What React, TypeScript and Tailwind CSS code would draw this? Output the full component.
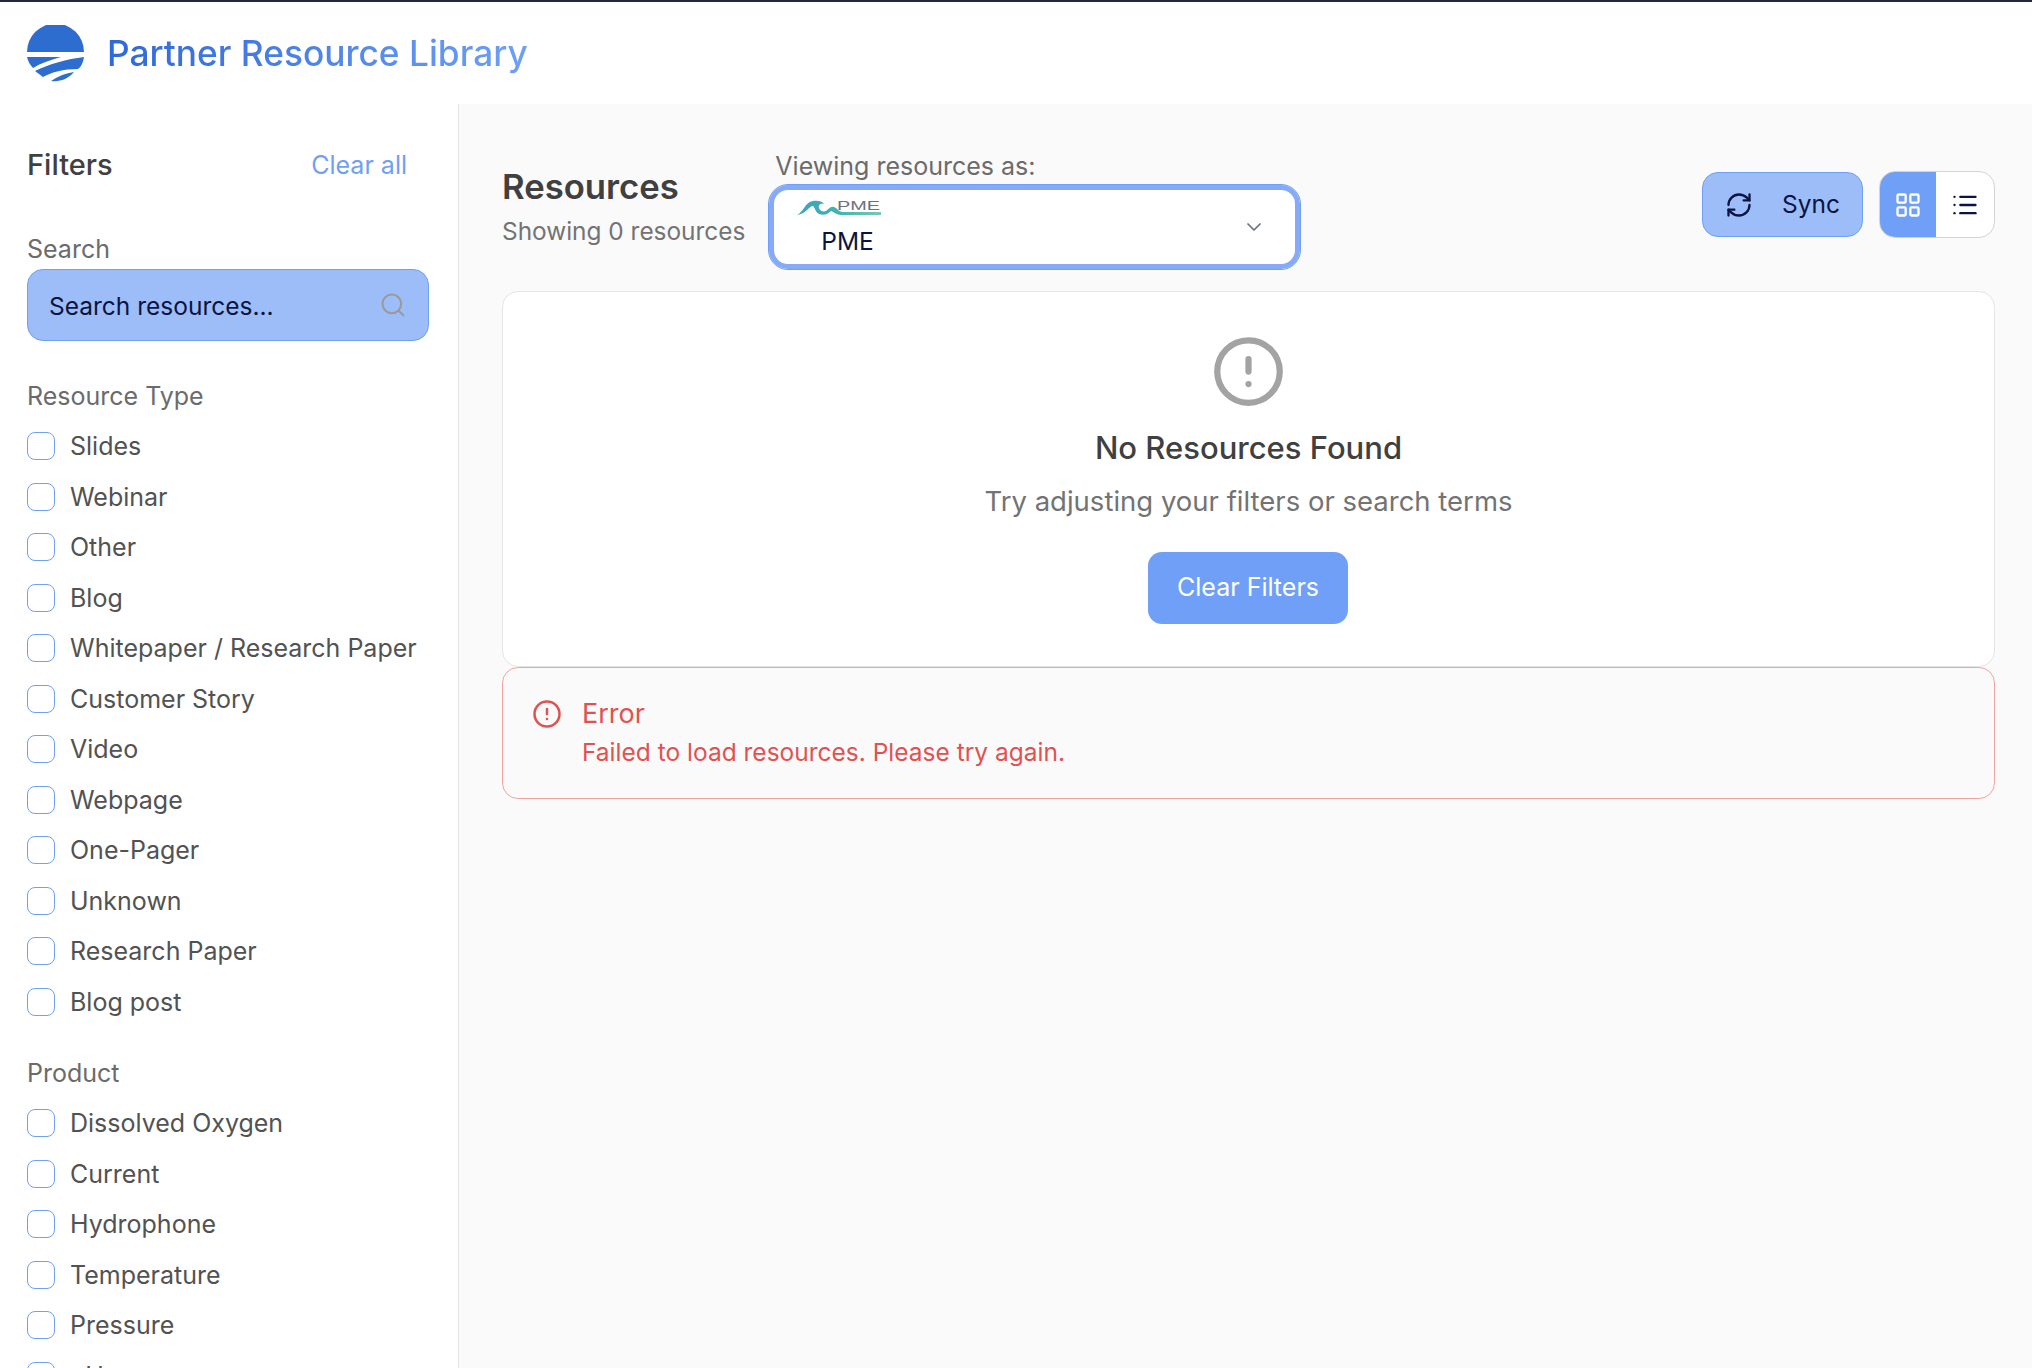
import { AlertCircle, ChevronDown, LayoutGrid, List, RefreshCw, Search } from 'lucide-react';

const resourceTypes = [
  'Slides',
  'Webinar',
  'Other',
  'Blog',
  'Whitepaper / Research Paper',
  'Customer Story',
  'Video',
  'Webpage',
  'One-Pager',
  'Unknown',
  'Research Paper',
  'Blog post',
];

const products = ['Dissolved Oxygen', 'Current', 'Hydrophone', 'Temperature', 'Pressure', 'pH'];

function FilterGroup({ title, items }: { title: string; items: string[] }) {
  return (
    <div>
      <h3 className="h-[30px] text-[25px] leading-[30px] text-[#6b6b6b]">{title}</h3>
      <div className="mt-[10px] flex flex-col">
        {items.map((item) => (
          <label key={item} className="flex h-[50.5px] shrink-0 items-center gap-[15px]">
            <span className="h-[28px] w-[28px] shrink-0 rounded-[8px] border border-[#6f9ff6] bg-white" />
            <span className="text-[25px] leading-[30px] text-[#525252]">{item}</span>
          </label>
        ))}
      </div>
    </div>
  );
}

function BrandMark() {
  return (
    <svg viewBox="0 0 57 57" className="h-[57px] w-[57px] shrink-0">
      <path d="M0 27 A28.5 28.5 0 0 1 57 27 Z" fill="#2d6dd0" />
      <path d="M0 32 H34 C24 35 14 38 6 43 C3 40 1 36 0 32 Z" fill="#2d6dd0" />
      <path d="M57 32 C56 38 54 42 51 44 C36 44 25 47 16 52 L8 46 C22 39 40 34 57 32 Z" fill="#2d6dd0" />
      <path d="M47 47 C41 54 33 57 24 56 C31 51 39 48 47 47 Z" fill="#2d6dd0" />
    </svg>
  );
}

function PmeLogo() {
  return (
    <svg viewBox="0 0 84 18" className="h-[18px] w-[84px]">
      <defs>
        <linearGradient id="pmeWave" x1="0" x2="1" y1="0" y2="0">
          <stop offset="0" stopColor="#3f9fc0" />
          <stop offset="0.5" stopColor="#3db6b0" />
          <stop offset="1" stopColor="#7cc8b4" />
        </linearGradient>
      </defs>
      <path
        d="M0 16 C6 14 8 3 16 2 C22 1 26 3 27 5 C23 4 21 6 22 9 C23 12 26 13 29 12 C32 10 33 7 37 8 C40 9 41 12 45 13 H84 V16 H44 C40 16 37 13 34 12 C31 15 27 17 22 15 C18 13 18 8 16 7 C12 7 9 15 0 16 Z"
        fill="url(#pmeWave)"
      />
      <text
        x="40"
        y="10.5"
        fontSize="13"
        fontFamily="Liberation Sans, sans-serif"
        fill="#6b7280"
        textLength="43"
        lengthAdjust="spacingAndGlyphs"
      >
        PME
      </text>
    </svg>
  );
}

export default function App() {
  return (
    <div className="flex h-screen flex-col overflow-hidden border-t-2 border-[#1f2937] bg-white font-['Inter',sans-serif]">
      {/* Header */}
      <header className="flex h-[102px] shrink-0 items-center gap-[23px] pl-[27px]">
        <BrandMark />
        <h1 className="mt-[2px] bg-gradient-to-r from-[#2f68d8] to-[#6ea0f5] bg-clip-text text-[35.3px] font-medium leading-[44px] text-transparent">
          Partner Resource Library
        </h1>
      </header>

      <div className="flex min-h-0 flex-1">
        {/* Filters */}
        <aside className="w-[459px] shrink-0 overflow-hidden border-r border-[#e5e5e5] pl-[27px] pr-[29px] pt-[43px]">
          <div className="flex h-[36px] items-center justify-between pr-[22px]">
            <h2 className="text-[29px] font-medium leading-[36px] text-[#404040]">Filters</h2>
            <button type="button" className="text-[25px] leading-[30px] text-[#6f9ff6]">
              Clear all
            </button>
          </div>
          <div className="mt-[51px]">
            <label className="block h-[35px] text-[25px] leading-[30px] text-[#6b6b6b]">Search</label>
            <div className="flex h-[72px] items-center justify-between rounded-[16px] border border-[#6f9ff6] bg-[#9dbdf9] pl-[21px] pr-[21px]">
              <span className="pt-[2px] text-[24.5px] text-[#0b1440]">Search resources...</span>
              <Search className="h-[28px] w-[28px] text-[#9a9a9a]" strokeWidth={1.75} />
            </div>
          </div>
          <div className="mt-[40px] flex flex-col gap-[31px]">
            <FilterGroup title="Resource Type" items={resourceTypes} />
            <FilterGroup title="Product" items={products} />
          </div>
        </aside>

        {/* Main */}
        <main className="min-w-0 flex-1 bg-[#fafafa] pl-[43px] pr-[37px] pt-[47px]">
          <div className="flex h-[140px] items-start justify-between">
            <div className="flex items-start gap-[23px]">
              <div className="pt-[13px]">
                <h2 className="text-[34.7px] font-semibold leading-[44px] text-[#404040]">Resources</h2>
                <p className="mt-[8px] text-[24.4px] leading-[30px] text-[#737373]">Showing 0 resources</p>
              </div>
              <div className="-mt-[3px]">
                <label className="block h-[36px] pl-[7px] text-[25px] leading-[36px] text-[#6b6b6b]">Viewing resources as:</label>
                <div className="flex h-[86px] w-[533px] items-center justify-between rounded-[20px] border border-[#6f9ff6] bg-white pl-[28px] pr-[34px] ring-[5px] ring-inset ring-[#86aaf8]">
                  <div className="flex flex-col">
                    <PmeLogo />
                    <span className="mt-[9px] pl-[24px] text-[24.5px] leading-[30px] text-[#0b1440]">PME</span>
                  </div>
                  <ChevronDown className="h-[24px] w-[24px] text-[#6b7280]" strokeWidth={1.75} />
                </div>
              </div>
            </div>
            <div className="flex items-start gap-[16px] pt-[21px]">
              <button
                type="button"
                className="flex h-[65px] w-[161px] items-center gap-[29px] rounded-[16px] border border-[#6f9ff6] bg-[#9dbdf9] pl-[22px] text-[24.5px] text-[#0b1440]"
              >
                <RefreshCw className="h-[28px] w-[28px]" strokeWidth={2} />
                Sync
              </button>
              <div className="-mt-[1px] flex h-[67px] w-[116px] overflow-hidden rounded-[16px] border border-[#d4d4d4] bg-white">
                <button type="button" className="flex w-[56px] items-center justify-center bg-[#6f9ff6] text-white">
                  <LayoutGrid className="h-[28px] w-[28px]" strokeWidth={2} />
                </button>
                <button type="button" className="flex flex-1 items-center justify-center text-[#0b1440]">
                  <List className="h-[28px] w-[28px]" strokeWidth={2} />
                </button>
              </div>
            </div>
          </div>

          <div>
            <section className="flex h-[376px] flex-col items-center rounded-[16px] border border-[#e5e5e5] bg-white pt-[42px]">
              <AlertCircle className="h-[75px] w-[75px] text-[#a3a3a3]" strokeWidth={2} />
              <h3 className="mt-[20px] text-[31px] font-medium leading-[38px] text-[#404040]">No Resources Found</h3>
              <p className="mt-[16px] text-[27.5px] leading-[36px] text-[#737373]">Try adjusting your filters or search terms</p>
              <button type="button" className="mr-[1px] mt-[33px] h-[72px] w-[200px] rounded-[14px] bg-[#6f9ff6] text-[25px] text-white">
                Clear Filters
              </button>
            </section>
            <section className="flex h-[132px] items-start gap-[20px] rounded-[16px] border border-[#f3a3a3] pl-[29px] pt-[29px]">
              <AlertCircle className="mt-[2px] h-[30px] w-[30px] text-[#e05252]" strokeWidth={2} />
              <div>
                <h4 className="text-[27px] leading-[34px] text-[#e05252]">Error</h4>
                <p className="mt-[6px] text-[24.5px] leading-[30px] text-[#e05252]">Failed to load resources. Please try again.</p>
              </div>
            </section>
          </div>
        </main>
      </div>
    </div>
  );
}
